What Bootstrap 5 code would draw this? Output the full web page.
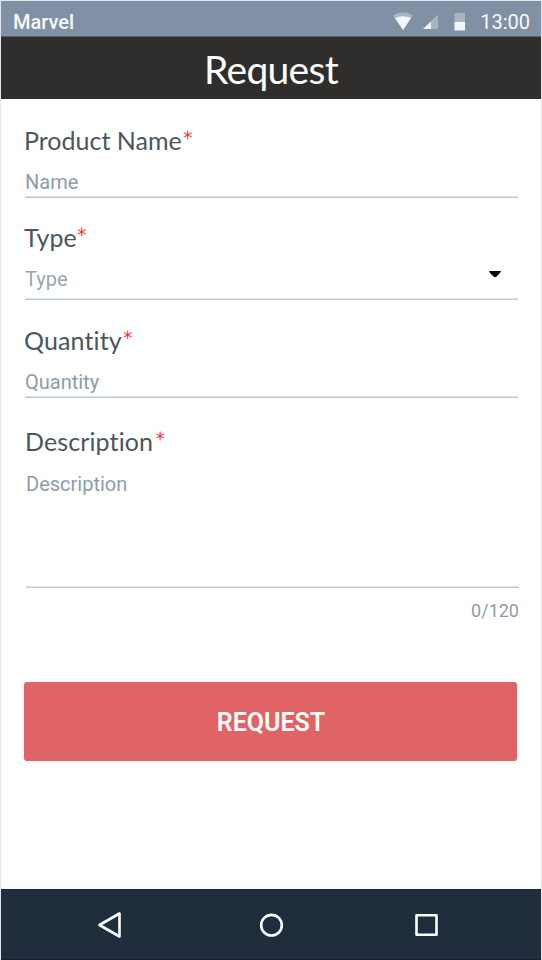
<!DOCTYPE html>
<html lang="en">
<head>
<meta charset="utf-8">
<meta name="viewport" content="width=device-width, initial-scale=1">
<title>Request</title>
<link href="https://cdn.jsdelivr.net/npm/bootstrap@5.3.0/dist/css/bootstrap.min.css" rel="stylesheet">
<style>
body{font-family:Roboto,"Liberation Sans",sans-serif;background:#fff}
.screen{height:960px;border:1px solid #e0e6ef;border-bottom:0;overflow:hidden}
.status{height:36px;background:#8190a5;border-bottom:1px solid #566170;color:#f8f9fb;font-size:20px;line-height:24px;padding:8px 11px 0 12px}
.brand{font-weight:500;line-height:26px}
.clock{line-height:26px}
.title-bar{height:62px;background:#2f2e2c}
.title-bar h1{font:400 39px/47px Lato,sans-serif;color:#fff;margin-top:9px;letter-spacing:-.7px}
.request-form{padding:0 23px}
.field-label{font:400 25px/30px Lato,sans-serif;font-variant-ligatures:none;color:#4b5661}
.req{color:#ff1818;font:300 28px/30px Lato,sans-serif;height:30px;-webkit-text-stroke:.25px #ff1818;margin-left:0}
.f-type .req{margin-left:-1px}
.f-qty .field-label,.f-desc .field-label{letter-spacing:.12px}
.f-desc .req{margin-left:1px}
.line-input,.line-input:focus{width:auto;flex:1 1 0;border-bottom:1px solid #b9c8d6;box-shadow:inset 0 -1px #dde6ee;font-size:20px;line-height:24px;color:#8492a6;background:transparent;resize:none;padding-left:0;margin-left:1px}
.line-input::placeholder{color:#8d9bae;opacity:1}
.type-input::placeholder{color:#9ba5b1}
.f-name{padding-top:26px}.f-type{padding-top:24px}.f-qty{padding-top:25px}.f-desc{padding-top:28px;margin-left:1px;margin-right:-1px}
.h-line{height:28px;margin-top:15px;padding-top:0;padding-bottom:4px}
.h-select{height:32px;margin-top:16px;padding-top:0;padding-bottom:10px}
.h-area{height:116px;margin-top:16px}
.caret{right:17px;top:19px}
.counter{font-size:18px;line-height:22px;color:#8d9bae;margin:12px -1px 0 0}
.btn-request,.btn-request:hover{height:79px;margin:60px 1px 0 0;background:#e06466;color:#fff;border:0;border-radius:3px;font-size:25px;font-weight:600;padding:2px 0 0 1px}
.sysnav{height:71px;background:#1f2d3d;border-bottom:1px solid #1b2035}
</style>
<script src="https://cdn.jsdelivr.net/npm/bootstrap@5.3.0/dist/js/bootstrap.bundle.min.js"></script>
</head>
<body>
<div class="screen d-flex flex-column">
  <div class="status d-flex justify-content-between flex-shrink-0">
    <span class="brand">Marvel</span>
    <div class="d-flex">
      <svg width="88" height="24" viewBox="0 0 88 24" aria-hidden="true">
        <path d="M1 6.500Q11 0 21 6.500L11 21Z" fill="#a9b4c2"/>
        <path d="M3 9Q11 5.500 19 9L11 21Z" fill="#f4f6f7"/>
        <path d="M46 5.500V20H31Z" fill="#a9b4c2"/>
        <path d="M39 12.500V20H31Z" fill="#f4f6f7"/>
        <path d="M62.500 4h10.500v9H62.500z" fill="#a9b4c2"/>
        <path d="M62.500 13h10.500v8.500H62.500z" fill="#f4f6f7"/>
      </svg>
      <span class="clock">13:00</span>
    </div>
  </div>
  <header class="title-bar d-flex justify-content-center align-items-start flex-shrink-0"><h1 class="mb-0">Request</h1></header>
  <form class="request-form flex-grow-1">
    <div class="f-name">
      <label class="field-label d-flex" for="pname">Product Name<span class="req">*</span></label>
      <div class="d-flex"><input id="pname" class="form-control line-input h-line border-top-0 border-start-0 border-end-0 rounded-0 pe-0" placeholder="Name"></div>
    </div>
    <div class="f-type">
      <label class="field-label d-flex" for="ptype">Type<span class="req">*</span></label>
      <div class="position-relative d-flex">
        <input id="ptype" class="form-control line-input h-select type-input border-top-0 border-start-0 border-end-0 rounded-0 pe-0" placeholder="Type" readonly>
        <svg class="caret position-absolute" width="12" height="7" viewBox="0 0 12 7" aria-hidden="true"><path d="M0 0H12L11 2L7.500 5.500Q6 6.800 4.500 5.500L1 2Z" fill="#000"/></svg>
      </div>
    </div>
    <div class="f-qty">
      <label class="field-label d-flex" for="qty">Quantity<span class="req">*</span></label>
      <div class="d-flex"><input id="qty" class="form-control line-input h-line border-top-0 border-start-0 border-end-0 rounded-0 pe-0" placeholder="Quantity"></div>
    </div>
    <div class="f-desc">
      <label class="field-label d-flex" for="desc">Description<span class="req">*</span></label>
      <div class="d-flex"><textarea id="desc" class="form-control line-input h-area border-top-0 border-start-0 border-end-0 rounded-0 py-0 pe-0" placeholder="Description" maxlength="120"></textarea></div>
    </div>
    <div class="counter text-end">0/120</div>
    <div class="d-flex"><button type="button" class="btn btn-request flex-grow-1">REQUEST</button></div>
  </form>
  <nav class="sysnav flex-shrink-0">
    <svg width="540" height="70" viewBox="0 0 540 70" fill="none" stroke="#fff" stroke-width="2.600" stroke-linejoin="round" aria-hidden="true">
      <path d="M98.500 36L118.500 24.500V47.500Z"/>
      <circle cx="270.500" cy="36.200" r="10.300"/>
      <rect x="415.500" y="26.200" width="20" height="19.500"/>
    </svg>
  </nav>
</div>
</body>
</html>
